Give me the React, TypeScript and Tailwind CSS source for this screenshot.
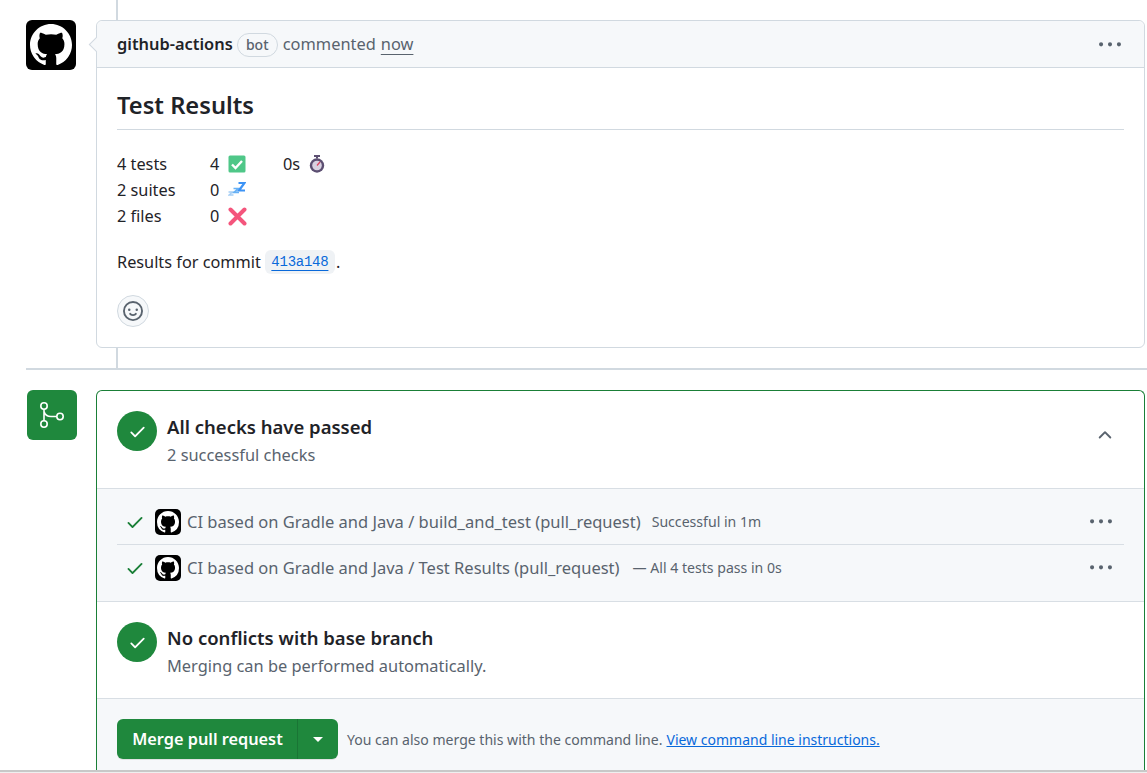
const MARK = "M8 0c4.42 0 8 3.58 8 8a8.013 8.013 0 0 1-5.45 7.59c-.4.08-.55-.17-.55-.38 0-.27.01-1.13.01-2.2 0-.75-.25-1.23-.54-1.48 1.78-.2 3.65-.88 3.65-3.95 0-.88-.31-1.59-.82-2.15.08-.2.36-1.02-.08-2.12 0 0-.67-.22-2.2.82-.64-.18-1.32-.27-2-.27-.68 0-1.36.09-2 .27-1.53-1.03-2.2-.82-2.2-.82-.44 1.1-.16 1.92-.08 2.12-.51.56-.82 1.28-.82 2.15 0 3.06 1.86 3.75 3.64 3.95-.23.2-.44.55-.51 1.07-.46.21-1.61.55-2.33-.66-.15-.24-.6-.83-1.23-.82-.67.01-.27.38.01.53.34.19.73.9.82 1.13.16.45.68 1.31 2.69.94 0 .67.01 1.3.01 1.49 0 .21-.15.45-.55.38A7.995 7.995 0 0 1 0 8c0-4.42 3.58-8 8-8Z";
const CHECK = "M13.78 4.22a.75.75 0 0 1 0 1.06l-7.25 7.25a.75.75 0 0 1-1.06 0L2.22 9.28a.751.751 0 0 1 .018-1.042.751.751 0 0 1 1.042-.018L6 10.94l6.72-6.72a.75.75 0 0 1 1.06 0Z";
const KEBAB = "M8 9a1.5 1.5 0 1 0 0-3 1.5 1.5 0 0 0 0 3ZM1.5 9a1.5 1.5 0 1 0 0-3 1.5 1.5 0 0 0 0 3Zm13 0a1.5 1.5 0 1 0 0-3 1.5 1.5 0 0 0 0 3Z";

function Oct({ d, size, className }: { d: string; size: number; className?: string }) {
  return (
    <svg width={size} height={size} viewBox="0 0 16 16" fill="currentColor" className={className}>
      <path d={d} />
    </svg>
  );
}

function Avatar({ box, icon, radius }: { box: string; icon: number; radius: string }) {
  return (
    <div className={`${box} ${radius} bg-black flex items-center justify-center shrink-0 text-white`}>
      <Oct d={MARK} size={icon} />
    </div>
  );
}

function EmojiCheck() {
  return (
    <svg width="18" height="18" viewBox="0 0 18 18" className="shrink-0">
      <rect x="0.5" y="0.5" width="17" height="17" rx="1.5" fill="#4fc788" />
      <path d="M4 9.5 7.5 13 14 6" fill="none" stroke="#fff" strokeWidth="2.4" />
    </svg>
  );
}
function EmojiZzz() {
  return (
    <svg width="18" height="18" viewBox="0 0 18 18" className="shrink-0">
      <path d="M0.5 11h4L1 14h4.5" fill="none" stroke="#a5cef5" strokeWidth="1.4" />
      <path d="M5.5 7.5h5L6 11.5h5" fill="none" stroke="#68b2f5" strokeWidth="1.7" />
      <path d="M10.5 2h6L11 9.5h6" fill="none" stroke="#3d93f5" strokeWidth="2.2" />
    </svg>
  );
}
function EmojiX() {
  return (
    <svg width="19" height="19" viewBox="0 0 19 19" className="shrink-0">
      <path d="M2.5 2.5 16.5 16.5M16.5 2.5 2.5 16.5" fill="none" stroke="#f4557c" strokeWidth="4" strokeLinecap="round" />
    </svg>
  );
}
function EmojiWatch() {
  return (
    <svg width="16" height="18" viewBox="0 0 16 18" className="shrink-0">
      <rect x="5" y="0" width="6" height="2" fill="#5c4f72" />
      <rect x="7" y="1.5" width="2" height="2" fill="#5c4f72" />
      <circle cx="8" cy="10.5" r="7.2" fill="#5c4f72" />
      <circle cx="8" cy="10.5" r="4.8" fill="#d9d2e2" />
      <path d="M8 10.5 11 7" stroke="#e0405e" strokeWidth="1.2" />
    </svg>
  );
}

function CheckRow({ name, status, first }: { name: string; status: string; first?: boolean }) {
  return (
    <div className={`flex items-center h-[46px] ${first ? "border-b border-[#d8dee4] pt-[1px]" : ""}`}>
      <Oct d={CHECK} size={20} className="text-[#1a7f37] ml-[8px] shrink-0" />
      <div className="ml-[10px]">
        <Avatar box="w-[26px] h-[26px]" icon={22} radius="rounded-[5px]" />
      </div>
      <span className="ml-[6px] text-[16.5px] text-[#59636e]">{name}</span>
      <span className={`${first ? "ml-[11px]" : "ml-[13px]"} text-[14.1px] text-[#59636e]`}>{status}</span>
      <Oct d={KEBAB} size={22} className="text-[#59636e] ml-auto mr-[12px]" />
    </div>
  );
}

function StatusSection({ title, sub }: { title: string; sub: string }) {
  return (
    <div className="flex items-start gap-[10px] pl-[20px] pt-[20px]">
      <div className="w-[40px] h-[40px] rounded-full bg-[#1f883d] flex items-center justify-center text-white shrink-0">
        <Oct d={CHECK} size={19} />
      </div>
      <div className="pt-[2px]">
        <div className="text-[18.5px] leading-[28px] font-semibold text-[#1f2328]">{title}</div>
        <div className="text-[16.4px] leading-[28px] text-[#59636e]">{sub}</div>
      </div>
    </div>
  );
}

const rows: [string, string, JSX.Element, string | null][] = [
  ["4 tests", "4", <EmojiCheck />, "0s"],
  ["2 suites", "0", <EmojiZzz />, null],
  ["2 files", "0", <EmojiX />, null],
];

export default function App() {
  return (
    <div className="h-[773px] w-[1147px] overflow-hidden bg-white font-['Noto_Sans','Open_Sans',sans-serif] text-[#1f2328] flex flex-col">
      <div className="h-[20px] ml-[116px] w-[2px] bg-[#d1d9e0] shrink-0" />

      <div className="flex pl-[26px] shrink-0">
        <Avatar box="w-[50px] h-[50px]" icon={42} radius="rounded-[6px]" />
        <div className="relative ml-[20px] w-[1049px] h-[328px] border border-[#d1d9e0] rounded-[6px] flex flex-col">
          <div className="absolute left-[-6px] top-[18px] w-[11px] h-[11px] rotate-45 bg-[#f6f8fa] border-l border-b border-[#d1d9e0]" />
          <div className="relative h-[47px] shrink-0 rounded-t-[6px] bg-[#f6f8fa] border-b border-[#d1d9e0] flex items-center pl-[20px] pr-[23px] pt-[1px] text-[16.4px]">
            <span className="font-semibold">github-actions</span>
            <span className="ml-[4px] h-[24px] w-[41px] justify-center border border-[#d1d9e0] rounded-full text-[14px] font-medium text-[#59636e] flex items-center">bot</span>
            <span className="ml-[5px] text-[#59636e]">commented</span>
            <span className="ml-[5px] text-[#59636e] underline underline-offset-[4px]">now</span>
            <Oct d={KEBAB} size={22} className="text-[#59636e] ml-auto" />
          </div>
          <div className="flex-1 pl-[20px] pr-[20px] flex flex-col">
            <div className="mt-[20px] pb-[7px] border-b border-[#d1d9e0] text-[23.7px] leading-[34px] font-semibold">Test Results</div>
            <div className="mt-[21px] flex flex-col text-[16.3px]">
              {rows.map(([a, b, e, c]) => (
                <div key={a} className="flex items-center h-[26px]">
                  <span className="w-[93px]">{a}</span>
                  <span className="w-[18px]">{b}</span>
                  <span className="w-[55px] flex">{e}</span>
                  {c && <span className="w-[26px]">{c}</span>}
                  {c && <EmojiWatch />}
                </div>
              ))}
            </div>
            <div className="mt-[20px] flex items-center text-[16.3px] leading-[26px]">
              <span>Results for commit</span>
              <span className="ml-[4px] h-[24px] w-[70px] justify-center rounded-[6px] bg-[#eff2f5] flex items-center">
                <span className="text-[#0969da] text-[14px] underline underline-offset-[4px] font-['Liberation_Mono',monospace] tracking-[-0.25px]">413a148</span>
              </span>
              <span className="ml-[1px]">.</span>
            </div>
            <div className="mt-[20px] w-[32px] h-[32px] rounded-full border border-[#d1d9e0] bg-[#f6f8fa] flex items-center justify-center text-[#59636e]">
              <Oct d="M8 0a8 8 0 1 1 0 16A8 8 0 0 1 8 0ZM1.5 8a6.5 6.5 0 1 0 13 0 6.5 6.5 0 0 0-13 0Zm3.82 1.636a.75.75 0 0 1 1.038.175l.007.009c.103.118.22.222.35.31.264.178.683.37 1.285.37.602 0 1.02-.192 1.285-.371.13-.088.247-.192.35-.31l.007-.008a.75.75 0 0 1 1.222.87l-.022-.015c.02.013.021.015.021.015v.001l-.001.002-.002.003-.005.007-.014.019a2.066 2.066 0 0 1-.184.213c-.16.166-.338.316-.53.445-.63.418-1.37.638-2.127.629-.946 0-1.652-.308-2.126-.63a3.331 3.331 0 0 1-.715-.657l-.014-.02-.005-.006-.002-.003v-.002h-.001l.613-.432-.614.43a.75.75 0 0 1 .183-1.044ZM12 7a1 1 0 1 1-2 0 1 1 0 0 1 2 0ZM5 8a1 1 0 1 1 0-2 1 1 0 0 1 0 2Zm5.25 2.25.592.416a97.71 97.71 0 0 0-.592-.416Z" size={20} />
            </div>
          </div>
        </div>
      </div>

      <div className="h-[20px] ml-[116px] w-[2px] bg-[#d1d9e0] shrink-0" />
      <div className="h-[2px] ml-[26px] bg-[#d1d9e0] shrink-0" />

      <div className="flex pl-[27px] pt-[20px] flex-1 min-h-0">
        <div className="w-[50px] h-[50px] rounded-[6px] bg-[#1f883d] text-white shrink-0">
          <svg width="50" height="50" viewBox="0 0 50 50" fill="none" stroke="currentColor" strokeWidth="1.6">
            <circle cx="17" cy="16" r="3.2" />
            <circle cx="17" cy="34" r="3.2" />
            <circle cx="33" cy="26.5" r="3.2" />
            <path d="M17 19.2V30.8M17 21.5C18 25 21 26.5 24 26.5H29.8" />
          </svg>
        </div>
        <div className="ml-[19px] w-[1049px] border-x border-t border-[#1a7f37] rounded-t-[6px] flex flex-col">
          <div className="h-[98px] flex items-start shrink-0 border-b border-[#d8dee4] pr-[29px] justify-between">
            <StatusSection title="All checks have passed" sub="2 successful checks" />
            <Oct d="M3.22 10.53a.749.749 0 0 1 0-1.06l4.25-4.25a.749.749 0 0 1 1.06 0l4.25 4.25a.749.749 0 1 1-1.06 1.06L8 6.811 4.28 10.53a.749.749 0 0 1-1.06 0Z" size={20} className="text-[#59636e] mt-[34px]" />
          </div>
          <div className="h-[113px] shrink-0 bg-[#f6f8fa] border-b border-[#d8dee4] px-[20px] pt-[10px] flex flex-col">
            <CheckRow name="CI based on Gradle and Java / build_and_test (pull_request)" status="Successful in 1m" first />
            <CheckRow name="CI based on Gradle and Java / Test Results (pull_request)" status="— All 4 tests pass in 0s" />
          </div>
          <div className="h-[97px] shrink-0 border-b border-[#d8dee4]">
            <StatusSection title="No conflicts with base branch" sub="Merging can be performed automatically." />
          </div>
          <div className="flex-1 bg-[#f6f8fa] pl-[20px] pt-[20px] flex items-start">
            <div className="h-[40px] flex rounded-[6px] bg-[#1f883d] text-white shadow-[0_1px_0_rgba(31,35,40,0.1)]">
              <span className="h-full w-[181px] pl-[1px] flex items-center justify-center text-[16.3px] font-semibold border-r border-[#1a7535]">Merge pull request</span>
              <span className="h-full w-[40px] flex items-center justify-center">
                <span className="w-0 h-0 border-x-[5px] border-x-transparent border-t-[5px] border-t-white" />
              </span>
            </div>
            <div className="ml-[9px] h-[40px] pt-[1px] flex items-center text-[14.05px] text-[#59636e]">
              <span>You can also merge this with the command line.</span>
              <span className="ml-[4px] text-[14px] text-[#0969da] underline">View command line instructions.</span>
            </div>
          </div>
        </div>
      </div>
      <div className="h-[3px] bg-[#efefef] border-t-2 border-[#c8c8c8] shrink-0 -mt-[3px] relative" />
    </div>
  );
}
